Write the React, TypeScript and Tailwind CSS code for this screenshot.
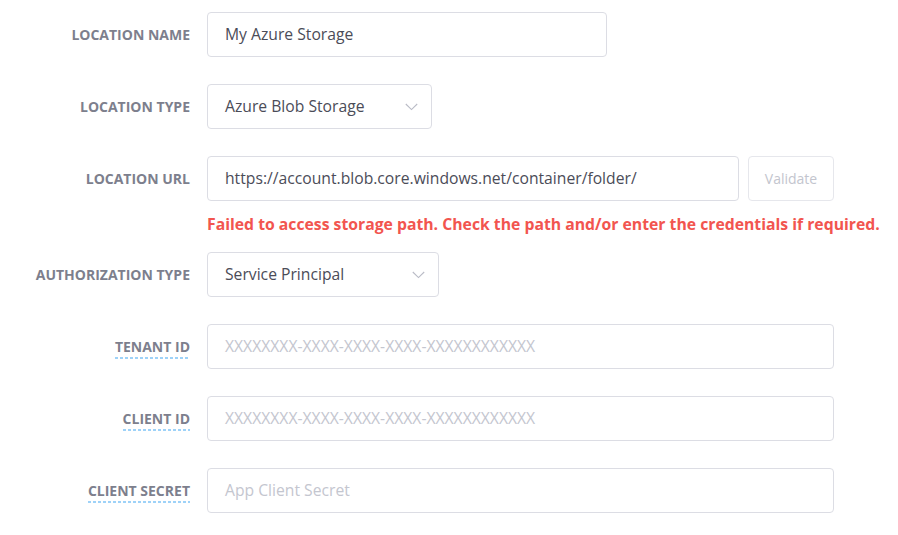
import React from "react";

const font = { fontFamily: '"Open Sans", "Noto Sans", sans-serif' };

function Label({ text, dashed }: { text: string; dashed?: boolean }) {
  return (
    <div className="w-[190px] shrink-0 flex justify-end">
      <span className="inline-flex flex-col items-stretch">
        <span className="text-[14px] font-bold text-[#7d7f8d] leading-[18px]">{text}</span>
        {dashed && (
          <svg className="block w-0 min-w-full h-[2px] mt-[1px] -mb-[3px]">
            <line x1="0" y1="1" x2="100%" y2="1" stroke="#3fa6f2" strokeWidth="1.2" strokeDasharray="3 2" />
          </svg>
        )}
      </span>
    </div>
  );
}

function Chevron() {
  return (
    <svg width="13" height="8" viewBox="0 0 13 8" fill="none">
      <path d="M0.8 1 L6.5 6.6 L12.2 1" stroke="#b9bbc6" strokeWidth="1.1" />
    </svg>
  );
}

function Input({ value, placeholder, w }: { value?: string; placeholder?: string; w: string }) {
  return (
    <div
      className={
        w +
        " h-[45px] rounded-[4px] border border-[#dcdde4] bg-white flex items-center pl-[17px] text-[15.7px] " +
        (value ? "text-[#4b4c58]" : "text-[#c4c6cf]")
      }
    >
      {value ?? placeholder}
    </div>
  );
}

function Select({ value, w }: { value: string; w: string }) {
  return (
    <div
      className={
        w +
        " h-[45px] rounded-[4px] border border-[#dcdde4] bg-white flex items-center justify-between pl-[17px] pr-[13px] text-[15.7px] text-[#4b4c58]"
      }
    >
      <span>{value}</span>
      <Chevron />
    </div>
  );
}

export default function App() {
  return (
    <div className="w-[898px] h-[535px] bg-white pt-[12px]" style={font}>
      <div className="flex items-center gap-[17px] mb-[27px]">
        <Label text="LOCATION NAME" />
        <Input w="w-[400px]" value="My Azure Storage" />
      </div>
      <div className="flex items-center gap-[17px] mb-[27px]">
        <Label text="LOCATION TYPE" />
        <Select w="w-[225px]" value="Azure Blob Storage" />
      </div>
      <div className="flex items-center gap-[17px]">
        <Label text="LOCATION URL" />
        <div className="flex items-center gap-[9px]">
          <Input w="w-[532px]" value="https://account.blob.core.windows.net/container/folder/" />
          <div className="w-[86px] h-[45px] rounded-[4px] border border-[#e6e7ec] flex items-center justify-center text-[14px] text-[#c3c5ce]">
            Validate
          </div>
        </div>
      </div>
      <div className="pl-[207px] mt-[11px] mb-[16px] text-[15.75px] leading-[24px] font-bold text-[#f2554f]">
        Failed to access storage path. Check the path and/or enter the credentials if required.
      </div>
      <div className="flex items-center gap-[17px] mb-[27px]">
        <Label text="AUTHORIZATION TYPE" />
        <Select w="w-[232px]" value="Service Principal" />
      </div>
      <div className="flex items-center gap-[17px] mb-[27px]">
        <Label text="TENANT ID" dashed />
        <Input w="w-[627px]" placeholder="XXXXXXXX-XXXX-XXXX-XXXX-XXXXXXXXXXXX" />
      </div>
      <div className="flex items-center gap-[17px] mb-[27px]">
        <Label text="CLIENT ID" dashed />
        <Input w="w-[627px]" placeholder="XXXXXXXX-XXXX-XXXX-XXXX-XXXXXXXXXXXX" />
      </div>
      <div className="flex items-center gap-[17px]">
        <Label text="CLIENT SECRET" dashed />
        <Input w="w-[627px]" placeholder="App Client Secret" />
      </div>
    </div>
  );
}
